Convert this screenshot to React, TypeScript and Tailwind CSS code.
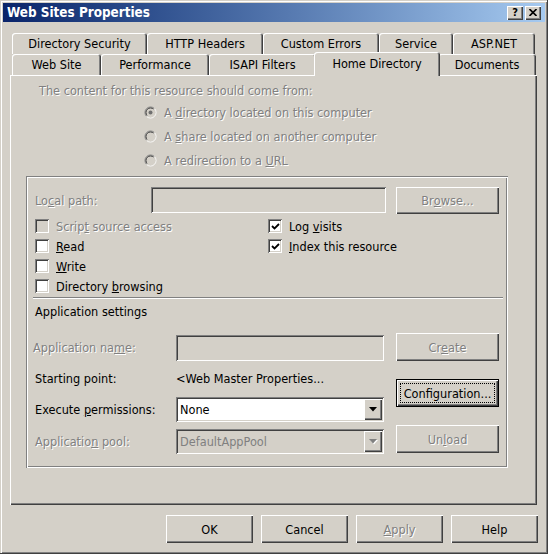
import React from "react";

const sunken =
  "shadow-[inset_1px_1px_0_#808080,inset_-1px_-1px_0_#ffffff,inset_2px_2px_0_#404040,inset_-2px_-2px_0_#d4d0c8]";
const raised =
  "shadow-[inset_1px_1px_0_#ffffff,inset_-1px_-1px_0_#404040,inset_-2px_-2px_0_#808080]";
const dis = "text-[#808080] [text-shadow:1px_1px_0_#ffffff]";

const Btn = ({
  children,
  className,
  disabled,
}: {
  children: React.ReactNode;
  className: string;
  disabled?: boolean;
}) => (
  <div
    className={`flex items-center justify-center bg-[#d4d0c8] ${raised} ${className} ${
      disabled ? dis : "text-black"
    }`}
  >
    {children}
  </div>
);

const Check = ({
  label,
  checked,
  disabled,
}: {
  label: React.ReactNode;
  checked?: boolean;
  disabled?: boolean;
}) => (
  <div className="flex h-[20px] items-center gap-[7px]">
    <div
      className={`flex h-[14px] w-[14px] items-center justify-center ${sunken} ${
        disabled ? "bg-[#d4d0c8]" : "bg-white"
      }`}
    >
      {checked && (
        <svg width="9" height="9" viewBox="0 0 9 9">
          <path d="M1 4 L3.5 6.5 L8 2" fill="none" stroke="#000" strokeWidth="1.8" />
        </svg>
      )}
    </div>
    <span className={disabled ? dis : "text-black"}>{label}</span>
  </div>
);

const Radio = ({ label, checked }: { label: React.ReactNode; checked?: boolean }) => (
  <div className="flex h-[24px] items-center gap-[7px] pl-[134px]">
    <svg width="13" height="13" viewBox="0 0 13 13">
      <circle cx="6.5" cy="6.5" r="5" fill="#d4d0c8" />
      <path d="M2.6 10.4 A5.5 5.5 0 0 1 10.4 2.6" fill="none" stroke="#808080" />
      <path d="M10.4 2.6 A5.5 5.5 0 0 1 2.6 10.4" fill="none" stroke="#ffffff" />
      <path d="M3.3 9.7 A4.5 4.5 0 0 1 9.7 3.3" fill="none" stroke="#404040" />
      <path d="M9.7 3.3 A4.5 4.5 0 0 1 3.3 9.7" fill="none" stroke="#d4d0c8" />
      {checked && <circle cx="6.5" cy="6.5" r="2" fill="#707070" />}
    </svg>
    <span className={dis}>{label}</span>
  </div>
);

const Select = ({ value, disabled }: { value: string; disabled?: boolean }) => (
  <div
    className={`flex h-[25px] w-[208px] items-center p-[2px] ${sunken} ${
      disabled ? "bg-[#d4d0c8]" : "bg-white"
    }`}
  >
    <span className={`flex-1 pl-[2px] ${disabled ? "text-[#808080]" : "text-black"}`}>
      {value}
    </span>
    <div className={`flex h-full w-[18px] items-center justify-center bg-[#d4d0c8] ${raised}`}>
      <svg width="9" height="6" viewBox="0 0 9 6">
        {disabled && <polygon points="1,1 9,1 5,5.5" fill="#ffffff" />}
        <polygon points="0,0 8,0 4,4.5" fill={disabled ? "#808080" : "#000"} />
      </svg>
    </div>
  </div>
);

const tabBase =
  "flex h-[21px] items-center justify-center rounded-t-[3px] bg-[#d4d0c8] shadow-[inset_1px_1px_0_#ffffff,inset_-1px_0_0_#404040,inset_-2px_0_0_#808080]";

export default function App() {
  return (
    <div className="flex h-[554px] w-[548px] flex-col bg-[#d4d0c8] p-[3px] font-['DejaVu_Sans_Condensed','DejaVu_Sans',sans-serif] text-[12.6px] leading-[15px] text-black shadow-[inset_-1px_-1px_0_#404040,inset_1px_1px_0_#d4d0c8,inset_2px_2px_0_#ffffff,inset_-2px_-2px_0_#808080]">
      {/* title bar */}
      <div className="flex h-[19px] items-center bg-linear-to-r from-[#0a246a] to-[#a6caf0] pl-[4px] pr-[4px]">
        <span className="flex-1 text-[13.4px] font-bold text-white">Web Sites Properties</span>
        <div className={`flex h-[14px] w-[16px] items-center justify-center bg-[#d4d0c8] text-[11px] font-bold ${raised}`}>
          ?
        </div>
        <div className={`ml-[2px] flex h-[14px] w-[16px] items-center justify-center bg-[#d4d0c8] ${raised}`}>
          <svg width="8" height="7" viewBox="0 0 8 7">
            <path d="M0.5 0 L7.5 7 M7.5 0 L0.5 7" stroke="#000" strokeWidth="1.6" />
          </svg>
        </div>
      </div>

      {/* tabs */}
      <div className="mt-[11px] flex h-[21px] pl-[9px]">
        <div className={`${tabBase} w-[135px]`}>Directory Security</div>
        <div className={`${tabBase} w-[116px]`}>HTTP Headers</div>
        <div className={`${tabBase} w-[116px]`}>Custom Errors</div>
        <div className={`${tabBase} w-[74px]`}>Service</div>
        <div className={`${tabBase} w-[82px]`}>ASP.NET</div>
      </div>
      <div className="flex h-[21px] pl-[9px]">
        <div className={`${tabBase} w-[89px]`}>Web Site</div>
        <div className={`${tabBase} w-[108px]`}>Performance</div>
        <div className={`${tabBase} w-[107px]`}>ISAPI Filters</div>
        <div className={`${tabBase} relative z-10 -mx-[2px] -mt-[2px] h-[24px] w-[126px] pb-[2px]`}>
          Home Directory
        </div>
        <div className={`${tabBase} w-[98px]`}>Documents</div>
      </div>

      {/* panel */}
      <div className="ml-[7px] flex h-[430px] w-[527px] flex-col shadow-[inset_1px_1px_0_#ffffff,inset_-1px_-1px_0_#404040,inset_-2px_-2px_0_#808080]">
        <div className={`mt-[8px] pl-[29px] ${dis}`}>
          The content for this resource should come from:
        </div>
        <div className="mt-[2px] flex flex-col">
          <Radio checked label={<>A <u>d</u>irectory located on this computer</>} />
          <Radio label={<>A <u>s</u>hare located on another computer</>} />
          <Radio label={<>A redirection to a <u>U</u>RL</>} />
        </div>

        {/* group box */}
        <div className="ml-[16px] mt-[4px] flex h-[292px] w-[482px] flex-col shadow-[inset_1px_1px_0_#808080,inset_2px_2px_0_#ffffff,inset_-1px_-1px_0_#ffffff,inset_-2px_-2px_0_#808080]">
          <div className="mt-[11px] flex h-[27px] items-start">
            <span className={`w-[125px] self-center pl-[9px] ${dis}`}>
              Lo<u>c</u>al path:
            </span>
            <div className={`h-[26px] w-[235px] bg-[#d4d0c8] ${sunken}`} />
            <Btn disabled className="ml-[10px] h-[27px] w-[103px]">
              Br<u>o</u>wse...
            </Btn>
          </div>

          <div className="mt-[2px] flex pl-[9px]">
            <div className="flex w-[233px] flex-col">
              <Check disabled label={<>Scrip<u>t</u> source access</>} />
              <Check label={<><u>R</u>ead</>} />
              <Check label={<><u>W</u>rite</>} />
              <Check label={<>Directory <u>b</u>rowsing</>} />
            </div>
            <div className="flex flex-col">
              <Check checked label={<>Log <u>v</u>isits</>} />
              <Check checked label={<><u>I</u>ndex this resource</>} />
            </div>
          </div>

          <div className="ml-[7px] mt-[1px] h-[2px] w-[470px] border-t border-b border-t-[#808080] border-b-white" />

          <div className="mt-[5px] pl-[9px]">Application settings</div>

          <div className="mt-[14px] flex">
            <div className="flex w-[358px] flex-col">
              <div className="flex h-[28px] items-center">
                <span className={`w-[150px] pl-[7px] ${dis}`}>
                  Application na<u>m</u>e:
                </span>
                <div className={`mt-[2px] h-[26px] w-[208px] self-start bg-[#d4d0c8] ${sunken}`} />
              </div>
              <div className="mt-[8px] flex h-[18px] items-center">
                <span className="w-[150px] pl-[9px]">Starting point:</span>
                <span>&lt;Web Master Properties...</span>
              </div>
              <div className="mt-[10px] flex h-[25px] items-center">
                <span className="w-[150px] pl-[9px]">
                  Execute <u>p</u>ermissions:
                </span>
                <Select value="None" />
              </div>
              <div className="mt-[7px] flex h-[25px] items-center">
                <span className={`w-[150px] pl-[9px] ${dis}`}>
                  Applicatio<u>n</u> pool:
                </span>
                <Select disabled value="DefaultAppPool" />
              </div>
            </div>
            <div className="ml-[12px] flex flex-col">
              <Btn disabled className="h-[28px] w-[103px]">
                Cr<u>e</u>ate
              </Btn>
              <div className={`relative mt-[18px] flex h-[28px] w-[103px] items-center justify-center border border-black bg-[#d4d0c8] ${raised}`}>
                <span className="absolute inset-[3px] border border-dotted border-black" />
                Confi<u>g</u>uration...
              </div>
              <Btn disabled className="mt-[18px] h-[28px] w-[103px]">
                Un<u>l</u>oad
              </Btn>
            </div>
          </div>
        </div>
      </div>

      {/* dialog buttons */}
      <div className="mt-[10px] flex justify-end gap-[8px] pr-[7px]">
        <Btn className="h-[28px] w-[87px]">OK</Btn>
        <Btn className="h-[28px] w-[87px]">Cancel</Btn>
        <Btn disabled className="h-[28px] w-[87px]">
          <u>A</u>pply
        </Btn>
        <Btn className="h-[28px] w-[87px]">Help</Btn>
      </div>
    </div>
  );
}
